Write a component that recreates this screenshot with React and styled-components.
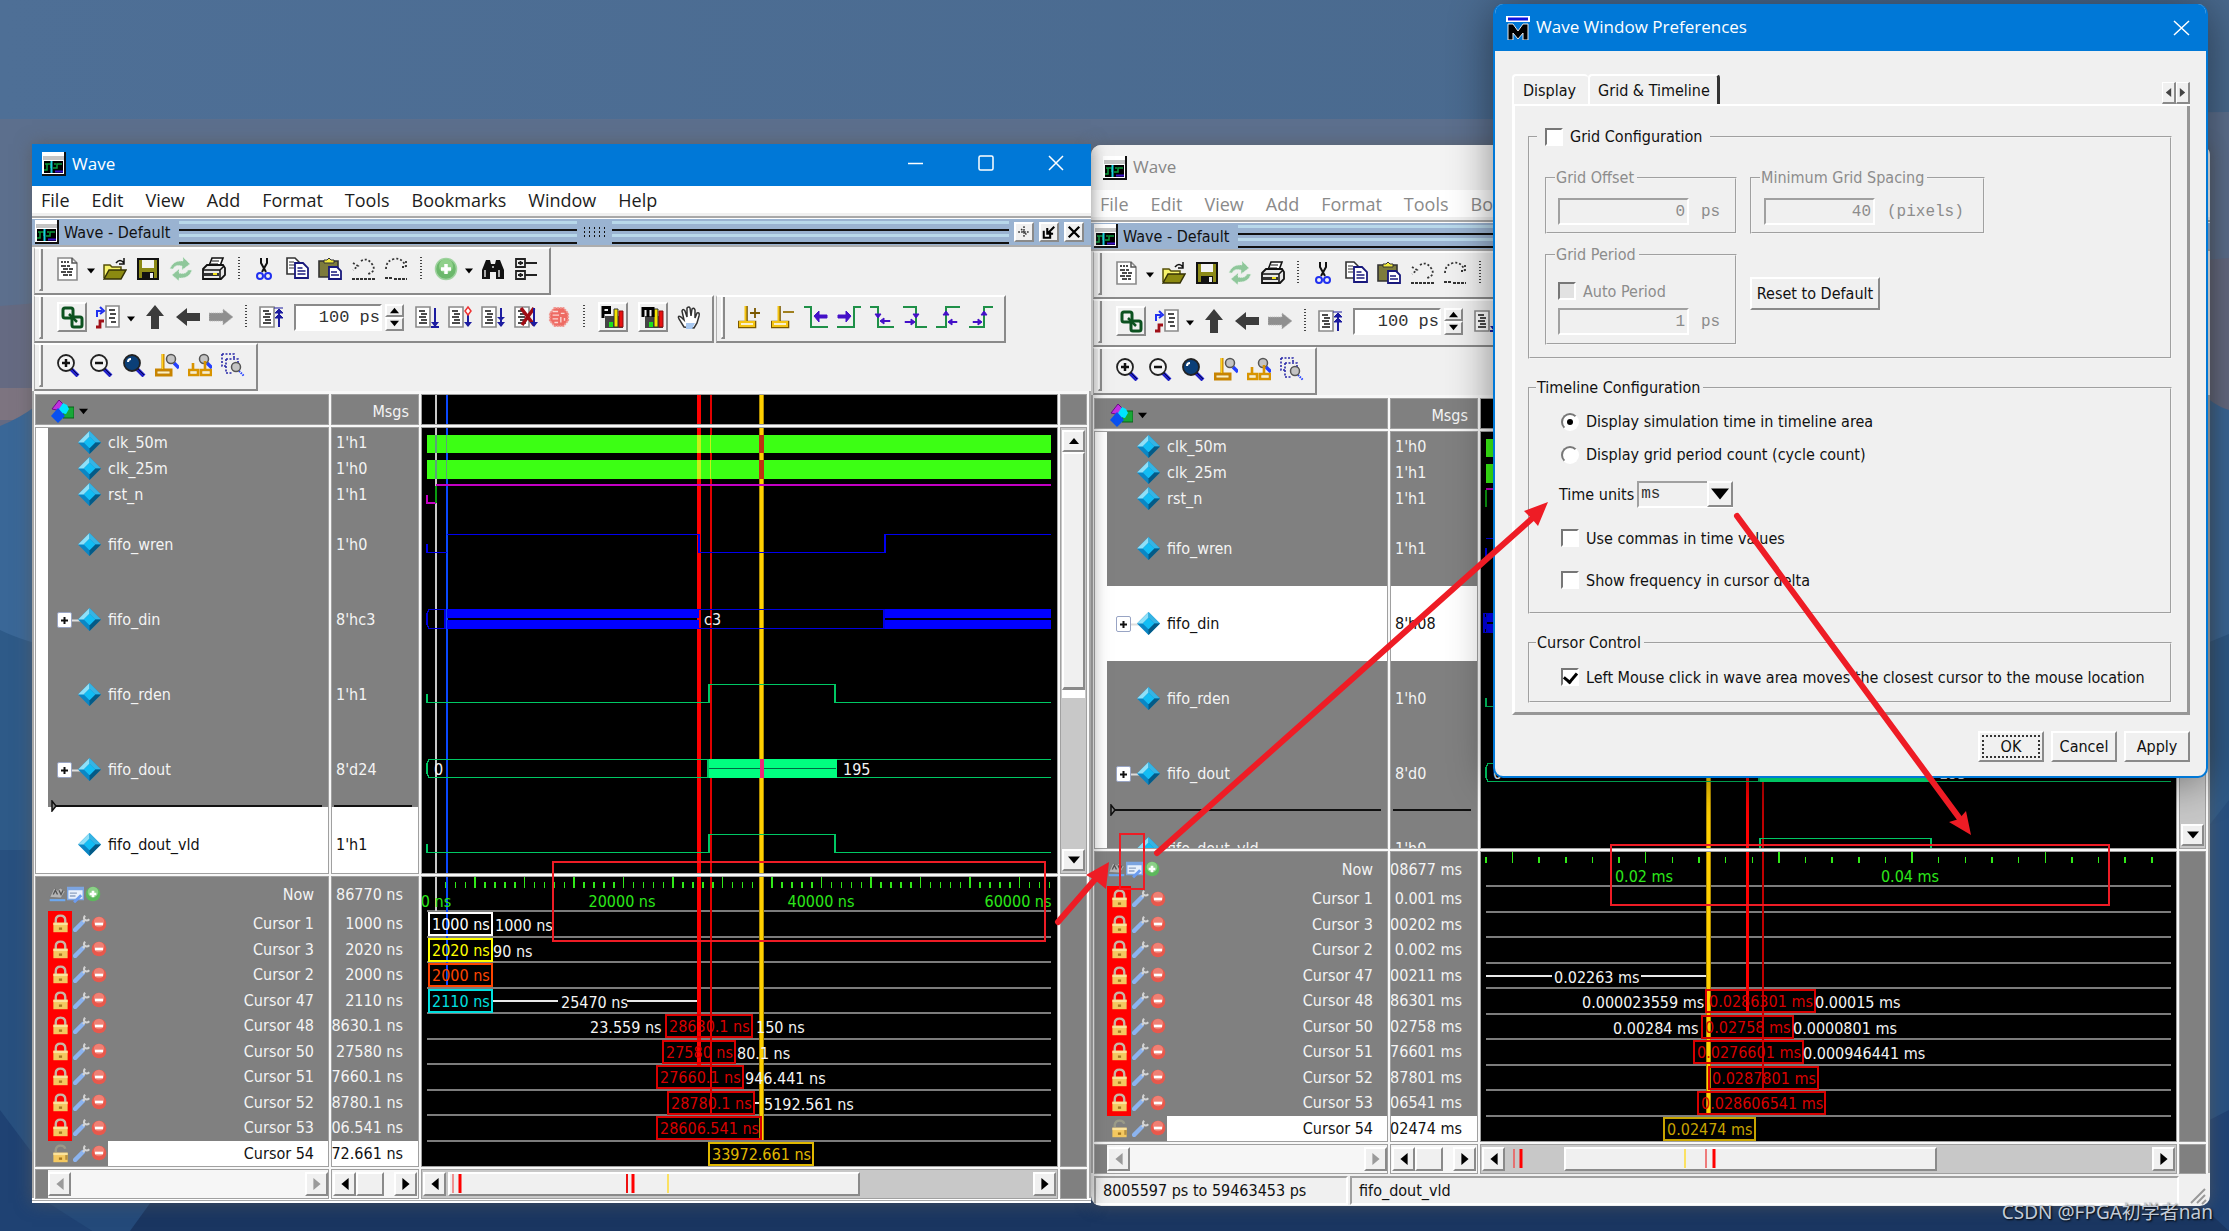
import React from "react";
import styled, { createGlobalStyle, css } from "styled-components";

const UI = `"DejaVu Sans Condensed", "DejaVu Sans", sans-serif`;
const SHELL = `"Open Sans", "Noto Sans", sans-serif`;
const MONO = `"Liberation Mono", monospace`;

const Global = createGlobalStyle`
  * { box-sizing: border-box; }
  body { margin: 0; background: #1b3863; font-family: ${UI}; font-size: 16px; color: #111; }
  button { font: inherit; color: inherit; border: 0; background: none; padding: 0; margin: 0; }
  svg { display: block; flex: none; }
`;

const raised = css`
  background: #f0f0f0;
  border: 2px solid;
  border-color: #fff #8a8a8a #8a8a8a #fff;
`;

/* ---------- desktop ---------- */

const Desktop = styled.main`
  position: relative;
  min-height: 100vh;
  overflow: hidden;
  display: grid;
  grid-template-columns: 32fr minmax(0, 1059fr) minmax(0, 1119fr) 19fr;
  align-items: start;
`;

const Layer = styled.svg`
  position: absolute;
  inset: 0;
  width: 100%;
  height: 100%;
  pointer-events: none;
`;

const Win = styled.section`
  position: relative;
  grid-row: 1;
  grid-column: ${(p) => p.$col};
  margin-top: ${(p) => (p.$active ? 144 : 145)}px;
  background: #f0f0f0;
  border-radius: ${(p) => (p.$active ? "0" : "10px")};
  overflow: hidden;
  box-shadow: 0 0 16px rgba(90, 90, 90, 0.7);
`;

const TitleBar = styled.header`
  display: flex;
  align-items: center;
  gap: 6px;
  height: ${(p) => (p.$active ? 42 : 45)}px;
  padding: ${(p) => (p.$active ? "0 3px 2px 10px" : "0 3px 0 12px")};
  font: 17px ${SHELL};
  color: ${(p) => (p.$active ? "#fff" : "#868686")};
  background: ${(p) => (p.$active ? "#0078d7" : "#f3f3f3")};
`;

const TitleText = styled.h1`
  margin: 0;
  flex: 1;
  font: inherit;
  padding-bottom: 2px;
`;

const CaptionButton = styled.button`
  width: 64px;
  height: 100%;
  padding-bottom: 2px;
  display: flex;
  align-items: center;
  justify-content: center;
`;

const MenuBar = styled.nav`
  display: flex;
  gap: 22px;
  height: 33px;
  padding: 0 9px 6px;
  align-items: center;
  background: linear-gradient(#fff 27px, #f0f0f0 27px 30px, #a8a8a8 30px 32px, #fff 32px);
  font: 18px ${SHELL};
  color: ${(p) => (p.$active ? "#1c1c1c" : "#8a8a8a")};
`;

const DockBar = styled.div`
  display: flex;
  align-items: center;
  gap: 5px;
  height: 28px;
  padding: 0 7px 0 3px;
  background: #9ab3d1;
  border-bottom: 2px solid #adadad;
`;

const DockTitle = styled.span`
  margin-right: 4px;
  white-space: nowrap;
`;

const Grip = styled.span`
  flex: 1;
  display: grid;
  gap: 3px;
  &::before,
  &::after {
    content: "";
    height: 5px;
    border-top: 3px solid #b8d8ea;
    border-bottom: 2px solid #111;
  }
`;

const GripDots = styled.span`
  width: 25px;
  height: 12px;
  background: radial-gradient(circle, #111 1px, transparent 1px) 0 0 / 5px 4px;
`;

const DockButton = styled.button`
  ${raised}
  width: 20px;
  height: 20px;
  display: flex;
  align-items: center;
  justify-content: center;
`;

/* ---------- toolbars ---------- */

const BarRow = styled.div`
  display: flex;
  gap: 2px;
  height: 48px;
  padding-left: 2px;
`;

const Toolbar = styled.div`
  display: flex;
  flex: none;
  align-items: center;
  padding: 0 7px 4px 4px;
  border-top: 2px solid #fff;
  border-left: 1px solid #b0b0b0;
  border-right: 2px solid #8a8a8a;
  border-bottom: 2px solid #8a8a8a;
`;

const Handle = styled.span`
  width: 4px;
  height: 42px;
  margin: 2px 8px 0 0;
  border-left: 1px solid #fff;
  border-right: 2px solid #8a8a8a;
  border-bottom: 2px solid #8a8a8a;
`;

const Tool = styled.button`
  width: 33px;
  height: 30px;
  display: flex;
  align-items: center;
  justify-content: center;
  ${(p) =>
    p.$raised &&
    css`
      ${raised}
      width: 30px;
      margin: 0 4px 0 6px;
    `}
`;

const Caret = styled.button`
  width: 14px;
  height: 30px;
  display: flex;
  align-items: center;
  justify-content: center;
  padding-top: 4px;
`;

const Sep = styled.span`
  width: 2px;
  height: 24px;
  margin: 0 7px 0 8px;
  background: repeating-linear-gradient(#444 0 1px, transparent 1px 3px);
`;

const StepInput = styled.input`
  width: 88px;
  height: 27px;
  margin: 0 3px 0 7px;
  padding: 0;
  border: 2px solid;
  border-color: #8a8a8a #fff #fff #8a8a8a;
  background: #fff;
  text-align: right;
  font: 17px ${MONO};
  color: #333;
`;

const Spinner = styled.span`
  display: grid;
  width: 19px;
  height: 27px;
  margin-right: 6px;
  grid-template-rows: 1fr 1fr;
`;

const SpinButton = styled.button`
  ${raised}
  display: flex;
  align-items: center;
  justify-content: center;
`;

/* ---------- panes ---------- */

const Panes = styled.div`
  display: grid;
  grid-template-columns: 292px 86px minmax(0, 1fr) 25px;
  grid-template-rows: 29px ${(p) => p.$signals}px 289px 28px;
  gap: 4px;
  padding: 4px 5px 0 4px;
  background: #f8f8f8;
  box-shadow: inset 2px 0 #a8a8a8, inset -2px 0 #a8a8a8;
`;

const Cell = styled.div`
  position: relative;
  overflow: hidden;
  background: ${(p) => p.$bg || "#808080"};
  outline: 1px solid #a0a0a0;
`;

const HeadCell = styled(Cell)`
  display: flex;
  align-items: center;
  justify-content: ${(p) => (p.$end ? "flex-end" : "flex-start")};
  padding: 3px 9px 0 14px;
  gap: 5px;
  color: #f4f4f4;
`;

const SignalCell = styled(Cell)`
  padding-top: 1px;
  background: ${(p) => (p.$strip ? "linear-gradient(90deg, #fff 12px, #808080 12px)" : "#808080")};
`;

const SignalRow = styled.div`
  display: flex;
  align-items: center;
  height: ${(p) => (p.$tall ? 75 : 26)}px;
  padding-left: ${(p) => (p.$value ? 4 : 21)}px;
  color: ${(p) => (p.$selected ? "#111" : "#f4f4f4")};
  background: ${(p) => (p.$selected ? "#fff" : "transparent")};
`;

const Expander = styled.span`
  display: flex;
  width: 21px;
  height: 24px;
  align-items: center;
`;

const SignalName = styled.span`
  padding-left: 7px;
`;

const Divider = styled.div`
  position: relative;
  height: 2px;
  margin: -2px 6px 0 ${(p) => (p.$value ? 2 : 18)}px;
  background: #111;
`;

const InsertMark = styled.svg`
  position: absolute;
  left: -3px;
  top: -5px;
`;

const CursorGrid = styled(Cell)`
  display: grid;
  grid-template-rows: 34px repeat(10, 1fr);
  color: #f4f4f4;
`;

const CursorRow = styled.div`
  display: flex;
  align-items: center;
  min-height: 0;
  padding-left: 12px;
`;

const LockBox = styled.button`
  width: 24px;
  height: 100%;
  display: flex;
  align-items: center;
  justify-content: center;
  background: ${(p) => (p.$locked ? "#f00" : "transparent")};
`;

const IconButton = styled.button`
  display: flex;
  width: 18px;
  align-items: center;
  justify-content: center;
`;

const CursorName = styled.span`
  flex: 1;
  height: 100%;
  display: flex;
  align-items: center;
  justify-content: flex-end;
  padding-right: 14px;
  white-space: pre;
  color: ${(p) => (p.$selected ? "#111" : "inherit")};
  background: ${(p) => (p.$selected ? "#fff" : "transparent")};
`;

const CursorValue = styled.div`
  display: flex;
  align-items: center;
  justify-content: flex-end;
  min-width: 0;
  min-height: 0;
  padding-right: 15px;
  white-space: nowrap;
  color: ${(p) => (p.$selected ? "#111" : "inherit")};
  background: ${(p) => (p.$selected ? "#fff" : "transparent")};
`;

const Plot = styled.svg`
  position: absolute;
  inset: 0;
  width: 100%;
  height: 100%;
`;

const Mark = styled.span`
  position: absolute;
  height: 24px;
  line-height: 24px;
  white-space: nowrap;
  color: ${(p) => p.$color || "#f4f4f4"};
  ${(p) => p.$center && "transform: translateX(-50%);"}
  ${(p) =>
    p.$boxed &&
    css`
      border: 2px solid ${p.$color};
      padding: 0 1px 0 2px;
      line-height: 21px;
    `}
`;

/* ---------- scroll bars ---------- */

const HBar = styled(Cell)`
  display: flex;
  padding: ${(p) => (p.$inset ? "2px 0 2px 12px" : "2px 1px")};
  background: ${(p) => (p.$inset ? "linear-gradient(90deg, #808080 12px, #f6f6f6 12px)" : p.$bg || "#f6f6f6")};
`;

const ScrollButton = styled.button`
  ${raised}
  flex: none;
  width: ${(p) => p.$w || 23}px;
  height: ${(p) => p.$h || 24}px;
  display: flex;
  align-items: center;
  justify-content: center;
`;

const HThumb = styled.span`
  ${raised}
  flex: ${(p) => p.$flex || "none"};
  width: ${(p) => p.$w || "auto"};
`;

const Fill = styled.span`
  flex: ${(p) => p.$n || 1};
`;

const VBar = styled(Cell)`
  display: flex;
  flex-direction: column;
  padding: 2px 1px;
  background: #c8c8c8;
`;

const VThumb = styled.span`
  ${raised}
  height: 238px;
  border-bottom-width: 3px;
  box-shadow: 0 8px #fff;
`;

const StatusBar = styled.footer`
  display: grid;
  grid-template-columns: 254px 1fr 26px;
  height: 33px;
  padding: 3px 3px 1px;
  gap: 2px;
  align-items: stretch;
`;

const StatusCell = styled.span`
  display: flex;
  align-items: center;
  padding-left: 7px;
  white-space: nowrap;
  border: 2px solid;
  border-color: #a0a0a0 #fff #fff #a0a0a0;
`;

const BottomEdge = styled.div`
  height: 5px;
  background: linear-gradient(#fff 2px, #a8a8a8 2px 3px, #fff 3px);
`;

/* ---------- dialog ---------- */

const Dialog = styled.section`
  position: absolute;
  top: 4px;
  right: 21px;
  width: 715px;
  background: #f0f0f0;
  border: 2px solid #0078d7;
  border-top: 0;
  border-radius: 10px;
  overflow: hidden;
  box-shadow: 0 4px 44px rgba(0, 0, 0, 0.45);
`;

const DialogTitle = styled.header`
  display: flex;
  align-items: center;
  height: 47px;
  padding: 0 12px 0 11px;
  gap: 6px;
  background: #0078d7;
  color: #fff;
  font: 17px ${SHELL};
`;

const DialogBody = styled.div`
  padding: 23px 16px 14px 17px;
`;

const TabRow = styled.div`
  display: flex;
  height: 32px;
  border-bottom: 2px solid #fff;
`;

const Tab = styled.button`
  padding: 0 ${(p) => (p.$active ? 7 : 12)}px 0 ${(p) => (p.$active ? 8 : 9)}px;
  border-top: 2px solid #fff;
  border-left: 2px solid #fff;
  border-right: ${(p) => (p.$active ? "3px solid #333" : "0")};
  border-radius: 4px 4px 0 0;
`;

const TabScroll = styled.div`
  display: flex;
  align-self: flex-end;
  margin-left: auto;
`;

const TabScrollButton = styled.button`
  ${raised}
  width: 14px;
  height: 22px;
  border-width: 1px 2px 2px 1px;
  display: flex;
  align-items: center;
  justify-content: center;
`;

const TabPage = styled.div`
  display: grid;
  gap: 19px;
  padding: 21px 15px 9px 13px;
  border-left: 3px solid #fff;
  border-right: 3px solid #979797;
  border-bottom: 3px solid #979797;
`;

const Group = styled.fieldset`
  min-width: 0;
  margin: 0;
  padding: ${(p) => p.$pad || "0"};
  border: 2px groove #f4f4f4;
  color: ${(p) => (p.$dim ? "#8c8c8c" : "inherit")};
  align-self: start;
`;

const Legend = styled.legend`
  height: 20px;
  line-height: 20px;
  margin-left: -${(p) => p.$pull}px;
  padding: 0 ${(p) => (p.$wide ? 8 : 3)}px 0 ${(p) => (p.$wide ? 8 : 1)}px;
`;

const GridForm = styled.div`
  display: grid;
  grid-template-columns: 192px 235px;
  gap: 11px 13px;
`;

const Field = styled.label`
  display: flex;
  align-items: center;
  gap: 12px;
  font: 16px ${MONO};
`;

const NumberInput = styled.input`
  width: ${(p) => p.$w}px;
  height: 27px;
  padding: 0 2px;
  border: 2px solid;
  border-color: #a0a0a0 #fff #fff #a0a0a0;
  background: #f0f0f0;
  color: #8c8c8c;
  text-align: right;
  font: 16px ${MONO};
`;

const Choice = styled.label`
  display: flex;
  align-items: center;
  gap: 7px;
  height: ${(p) => p.$h}px;
  white-space: nowrap;
  color: ${(p) => (p.$dim ? "#8c8c8c" : "inherit")};
`;

const Box = styled.input`
  appearance: none;
  flex: none;
  width: 18px;
  height: 18px;
  margin: 0;
  border: 2px solid;
  border-color: #777 #fff #fff #777;
  border-radius: ${(p) => (p.type === "radio" ? "50%" : "0")};
  background: ${(p) => (p.disabled ? "#e2e2e2" : "#fff")};
  display: grid;
  place-items: center;
  &[type="radio"]:checked::before {
    content: "";
    width: 6px;
    height: 6px;
    border-radius: 50%;
    background: #000;
  }
  &[type="checkbox"]:checked::before {
    content: "";
    width: 6px;
    height: 10px;
    margin-bottom: 3px;
    border: solid #000;
    border-width: 0 3px 3px 0;
    transform: rotate(40deg);
  }
`;

const UnitRow = styled.label`
  display: flex;
  align-items: center;
  gap: 3px;
  height: 46px;
  margin-left: -2px;
`;

const UnitWrap = styled.span`
  position: relative;
  display: flex;
`;

const UnitSelect = styled.select`
  appearance: none;
  width: 96px;
  height: 27px;
  padding: 0 2px;
  border: 2px solid;
  border-color: #a0a0a0 #fff #fff #a0a0a0;
  border-radius: 0;
  background: #f0f0f0;
  color: #333;
  font: 16px ${MONO};
`;

const UnitArrow = styled.span`
  ${raised}
  position: absolute;
  top: 0;
  right: 0;
  width: 26px;
  height: 26px;
  display: grid;
  place-items: center;
  pointer-events: none;
`;

const PushButton = styled.button`
  ${raised}
  height: ${(p) => p.$h || 31}px;
  min-width: 66px;
  padding: 0 2px;
  ${(p) => p.$focus && "outline: 2px dotted #333; outline-offset: -6px;"}
  ${(p) => p.$placed && "justify-self: start; margin-top: 32px; min-width: 130px;"}
`;

const Footer = styled.div`
  display: flex;
  justify-content: flex-end;
  gap: 7px;
  margin-top: 16px;
`;

const Watermark = styled.p`
  position: absolute;
  right: 16px;
  bottom: 6px;
  margin: 0;
  font: 19px/26px "Noto Sans", "Noto Sans CJK SC", sans-serif;
  color: #c3ccd8;
  text-shadow: 1px 1px 2px #000;
`;

/* ---------- icons ---------- */

const Icon = ({ children, s = 24, ...rest }) => (
  <svg width={s} height={s} viewBox="0 0 24 24" fill="none" aria-hidden="true" {...rest}>
    {children}
  </svg>
);

const Triangle = ({ dir = "down", color = "#000", s = 10 }) => {
  const d = { down: "M0 2h10L5 8z", up: "M0 8h10L5 2z", left: "M8 0v10L2 5z", right: "M2 0v10l6-5z" }[dir];
  return (
    <svg width={s} height={s} viewBox="0 0 10 10" aria-hidden="true">
      <path d={d} fill={color} />
    </svg>
  );
};

const AppIcon = () => (
  <Icon>
    <path d="M0 0h24v24H0z" fill="#111" />
    <path d="M0 0h22v22H0z" fill="#fff" />
    <path d="M1 4h21v4H1z" fill="#c4c4c4" />
    <path d="M2 9h19v12H2z" fill="#000" />
    <path d="M2 18h3v-6h4v4M11 16h4v-4h5M3 12h3M12 12h2" stroke="#0a9c3c" strokeWidth="1.5" />
    <path d="M9.500 9v12" stroke="#19d0e0" strokeWidth="2" />
    <path d="M13 19.500h8" stroke="#3a10c8" strokeWidth="2" />
  </Icon>
);

const Page = ({ x = 2 }) => (
  <>
    <path d={`M${x} 2h14v20H${x}z`} fill="#fff" stroke="#8a8a8a" strokeWidth="1.600" />
    <path
      d={`M${x + 3} 6h6M${x + 5} 9h6M${x + 3} 12h7M${x + 5} 15h6M${x + 3} 18h8`}
      stroke="#111"
      strokeWidth="1.500"
    />
  </>
);

const Lens = ({ fill = "#f4f4f4", children }) => (
  <Icon>
    <path d="M15 16l7 7" stroke="#2020c8" strokeWidth="4" />
    <path d="M15 15l7 7" stroke="#08084a" strokeWidth="1" />
    <circle cx="10" cy="10" r="8" fill={fill} stroke="#222" strokeWidth="1.800" />
    {children}
  </Icon>
);

const MiniLens = ({ x, y, dashed }) => (
  <>
    <path d={`M${x + 3} ${y + 4}l5 5`} stroke="#2440ff" strokeWidth={dashed ? 2 : 3.5} strokeDasharray={dashed ? "1.500 1" : ""} />
    <circle cx={x} cy={y} r="4.500" fill="#c4c4c4" stroke="#555" strokeWidth="1.500" />
  </>
);

const Edge = ({ d, arrows }) => (
  <Icon>
    <path d={d} stroke="#1f9048" strokeWidth="2" />
    <path d={arrows} fill="#4410c8" stroke="#4410c8" strokeWidth="1" />
  </Icon>
);

const Bars = ({ letter }) => (
  <Icon>
    <path d="M4 11h18v12H4z" fill="#444" />
    <path d="M8 17h4v5H8z" fill="#1ce01c" />
    <path d="M13 4h4v18h-4z" fill="#f4e400" stroke="#333" />
    <path d="M18 6h4v16h-4z" fill="#e81010" stroke="#811" />
    {letter === "P" ? (
      <path d="M2 13V2.500h6.500v5H2" stroke="#000" strokeWidth="3" />
    ) : (
      <path d="M2 12V3.500h10V12M7 4v8" stroke="#000" strokeWidth="3" />
    )}
  </Icon>
);

const RunArrow = ({ kind }) => (
  <Icon>
    <Page x={1} />
    {kind === "cross" && <path d="M7 3l13 17M20 3L8 20" stroke="#a00c14" strokeWidth="3.500" />}
    <path
      d={kind === "restart" ? "M20 22V4" : kind === "diamond" ? "M20 9v12" : "M20 3v18"}
      stroke="#1c1ca0"
      strokeWidth="2"
    />
    {kind === "restart" ? (
      <path d="M15 3h9M16 8l4-4 4 4zM16 13l4-4 4 4z" fill="#1c1ca0" stroke="#1c1ca0" />
    ) : (
      <path d="M16 17h8l-4 5z" fill="#1c1ca0" />
    )}
    {kind === "all" && <path d="M16 12h8l-4 4z" fill="#1c1ca0" />}
    {kind === "run" && <path d="M16 22h8" stroke="#1c1ca0" strokeWidth="2" />}
    {kind === "diamond" && <path d="M20 2l3 4-3 4-3-4z" fill="#fff" stroke="#e33" strokeWidth="1.500" />}
  </Icon>
);

const arrowGrad = "#3c3c3c";

const icons = {
  new: (
    <Icon>
      <path d="M2 1h14l5 5v17H2z" fill="#fff" stroke="#8a8a8a" strokeWidth="1.600" />
      <path d="M16 1v5h5" stroke="#555" strokeWidth="1.500" />
      <path d="M5 5h8" stroke="#111" strokeDasharray="2 1" strokeWidth="1.500" />
      <path d="M5 9h9M7 12h10M5 15h11M7 18h9" stroke="#111" strokeWidth="1.500" strokeDasharray="5 1" />
    </Icon>
  ),
  open: (
    <Icon>
      <path d="M1 21V8h6l2 2h9v3" fill="#f7f36c" stroke="#55500a" strokeWidth="1.500" />
      <path d="M1 22l5-9h17l-5 9z" fill="#8c8a10" stroke="#333005" strokeWidth="1.500" />
      <path d="M13 6q4-5 8 0M21 1v6h-5" stroke="#111" strokeWidth="1.500" />
    </Icon>
  ),
  save: (
    <Icon>
      <path d="M2 2h20v20H2z" fill="#8c8a18" stroke="#111" strokeWidth="2" />
      <path d="M6 3h12v8H6z" fill="#f4f4f4" />
      <path d="M6 15h12v7H6z" fill="#111" />
      <path d="M14 16h3v5h-3z" fill="#eee" />
    </Icon>
  ),
  reload: (
    <Icon fill="#8fc79b" stroke="#dff0e2" strokeWidth="1" strokeDasharray="1 1">
      <path d="M1 12q3-9 13-8V0l7 7-8 6V9q-7-2-9 3z" fill="#8fc79b" />
      <path d="M23 13q-3 9-13 8v3l-7-6 7-6v4q7 2 9-3z" fill="#8fc79b" />
    </Icon>
  ),
  print: (
    <Icon>
      <path d="M7 9l3-8h11l-3 8z" fill="#fff" stroke="#111" strokeWidth="1.600" />
      <path d="M10 4h7M9 7h7" stroke="#111" />
      <path d="M1 12l4-4h16l2 3v7l-4 4H1z" fill="#e8e8e8" stroke="#111" strokeWidth="1.800" />
      <path d="M1 13h17l4-4M18 13v8" stroke="#111" strokeWidth="1.500" />
      <path d="M2 17.500h15" stroke="#333" strokeWidth="3" />
      <path d="M11 17h4" stroke="#f2e21c" strokeWidth="2" />
    </Icon>
  ),
  cut: (
    <Icon>
      <path d="M9 1v5l5 9M15 1v5l-5 9" stroke="#111" strokeWidth="2" />
      <circle cx="8" cy="19" r="3" stroke="#2030f0" strokeWidth="2" />
      <circle cx="16" cy="19" r="3" stroke="#2030f0" strokeWidth="2" />
    </Icon>
  ),
  copy: (
    <Icon>
      <path d="M2 1h8l4 4v12H2z" fill="#fff" stroke="#333" strokeWidth="1.600" />
      <path d="M4 5h5M4 8h6M4 11h5" stroke="#333" />
      <path d="M10 6h8l5 5v10H10z" fill="#fff" stroke="#18187c" strokeWidth="1.800" />
      <path d="M12.500 11h5M12.500 14h8M12.500 17h8" stroke="#18187c" strokeWidth="1.500" />
    </Icon>
  ),
  paste: (
    <Icon>
      <path d="M1 4h19v16H1z" fill="#7d7b3c" stroke="#333" strokeWidth="1.600" />
      <path d="M6 6V3h3l2-2 2 2h3v3z" fill="#f4ec3c" stroke="#333" />
      <path d="M11 10h8l4 4v8H11z" fill="#fff" stroke="#18187c" strokeWidth="1.800" />
      <path d="M13 15h6M13 18h8" stroke="#18187c" strokeWidth="1.500" />
    </Icon>
  ),
  undo: (
    <Icon stroke="#333" strokeWidth="1.800">
      <path d="M2 6l5 3-5 4M10 4q6-4 11 3t-4 10" strokeDasharray="2 2" />
      <path d="M1 22h23" strokeDasharray="3 1" />
    </Icon>
  ),
  redo: (
    <Icon stroke="#333" strokeWidth="1.800">
      <path d="M22 4v6h-6M2 12q0-8 8-10t12 8" strokeDasharray="2 2" />
      <path d="M1 21h8M10 22h13" strokeDasharray="3 1" />
    </Icon>
  ),
  plus: (
    <Icon>
      <circle cx="12" cy="12" r="10.500" fill="#6cb86c" stroke="#9ed29e" strokeWidth="1.500" />
      <circle cx="12" cy="9" r="7" fill="#8fd08a" />
      <path d="M12 7v10M7 12h10" stroke="#fff" strokeWidth="3.500" />
    </Icon>
  ),
  find: (
    <Icon fill="#111">
      <path d="M1 22V13l4-10h4l1 4h4l1-4h4l4 10v9h-8v-7h-6v7z" fill="#111" />
      <path d="M4 13v7M18 13v7M11 10h2" stroke="#ddd" strokeWidth="1.500" />
    </Icon>
  ),
  tree: (
    <Icon stroke="#222" strokeWidth="1.800">
      <path d="M2 2h9v8H2zM2 14h9v8H2zM11 6h12M11 18h12M4 6h5M6.500 4v4M4 18h5M6.500 16v4" />
    </Icon>
  ),
  link: (
    <Icon stroke="#0c5220" strokeWidth="3">
      <rect x="3" y="3" width="10" height="10" rx="2" />
      <rect x="12" y="12" width="10" height="10" rx="2" />
      <path d="M9 9l8 8" strokeWidth="2.500" />
    </Icon>
  ),
  trace: (
    <Icon>
      <path d="M10 1h13v21H10z" fill="#fff" stroke="#8a8a8a" strokeWidth="1.600" />
      <path d="M13 5h6M14 9h6M13 13h6M15 17h5" stroke="#111" strokeWidth="1.600" />
      <path d="M1 12V6h5M4 2l4 4-4 3" stroke="#2030f0" strokeWidth="2" />
      <path d="M0 22h4v-6h4" stroke="#a01018" strokeWidth="2.800" />
    </Icon>
  ),
  up: (
    <Icon>
      <path d="M12 0l9 11h-5v13H8V11H3z" fill={arrowGrad} />
    </Icon>
  ),
  left: (
    <Icon>
      <path d="M0 12L11 3v5h13v8H11v5z" fill={arrowGrad} />
    </Icon>
  ),
  right: (
    <Icon>
      <path d="M24 12L14 4v4H0v8h14v4z" fill="#8f8f8f" stroke="#b8b8b8" strokeDasharray="1 1" />
    </Icon>
  ),
  restart: <RunArrow kind="restart" />,
  run: <RunArrow kind="run" />,
  cont: <RunArrow kind="diamond" />,
  runAll: <RunArrow kind="all" />,
  breakRun: <RunArrow kind="cross" />,
  stop: (
    <Icon s={22}>
      <path d="M7 2h10l5 6v8l-5 6H7l-5-6V8z" fill="#ee6b63" stroke="#f09a94" strokeWidth="2" strokeDasharray="2 1" />
      <path d="M11 6H5M5 10h7M5 14h6M7 18h4M14 8h4M14 12v6M18 13v3" stroke="#fbd6d2" strokeWidth="1.500" />
    </Icon>
  ),
  barsP: <Bars letter="P" />,
  barsM: <Bars letter="m" />,
  hand: (
    <Icon>
      <path
        d="M7 22l-5-8q-2-4 2-2l3 3-2-9q1-3 3 0l2 6V3q2-2 3 0l1 8 1-7q2-2 3 1v8l2-5q3-1 2 3l-2 7-3 5z"
        fill="#fff"
        stroke="#333"
        strokeWidth="1.500"
      />
      <path d="M9 18h9l-3 6H9z" fill="#a8c8f0" />
    </Icon>
  ),
  postPlus: (
    <Icon stroke="#7a5800" strokeWidth="2.600">
      <path d="M8.500 1v16M1 17h16v5H1z" stroke="#7a5800" />
      <path d="M7.500 1v16M2 17h14v4H2z" stroke="#f4c414" strokeWidth="2" fill="#f8f0d0" />
      <path d="M12 8h10M17 3v10" strokeWidth="1.800" />
    </Icon>
  ),
  postMinus: (
    <Icon>
      <path d="M8.500 1v16M1 17h16v5H1z" stroke="#7a5800" strokeWidth="2.600" />
      <path d="M7.500 1v16M2 17h14v4H2z" stroke="#f4c414" strokeWidth="2" fill="#f8f0d0" />
      <path d="M12 7h11" stroke="#a08020" strokeWidth="2" />
    </Icon>
  ),
  e1: <Edge d="M0 2h7v20h17" arrows="M10 11l5-5v4h8v3h-8v4z" />,
  e2: <Edge d="M24 2h-7v20H0" arrows="M14 11L9 6v4H1v3h8v4z" />,
  e3: <Edge d="M0 2h8v20h16" arrows="M5 9h6l-3 4zM10 16l4-3v2.500h6v1h-6V19z" />,
  e4: <Edge d="M0 2h13v20h11" arrows="M10 9h6l-3 4zM12 17l-4-3v2.500H2v1h6V20z" />,
  e5: <Edge d="M0 22h10V2h14" arrows="M7 10h6l-3-4zM12 17l4-3v2.500h5v1h-5V20z" />,
  e6: <Edge d="M0 22h15V2h9" arrows="M12 10h6l-3-4zM13 17l-4-3v2.500H4v1h5V20z" />,
  zoomIn: (
    <Lens>
      <path d="M10 6v8M6 10h8" stroke="#111" strokeWidth="2.500" />
    </Lens>
  ),
  zoomOut: (
    <Lens>
      <path d="M6 10h8" stroke="#111" strokeWidth="2.500" />
    </Lens>
  ),
  zoomFull: (
    <Lens fill="#0b3f78">
      <path d="M6 9q0-3 3-3" stroke="#fff" strokeWidth="2" />
    </Lens>
  ),
  zoomCursor: (
    <Icon>
      <path d="M8 1v15M1 17h15v5H1z" stroke="#c88400" strokeWidth="3" />
      <path d="M7.500 1v15" stroke="#ffd21c" strokeWidth="1.500" />
      <path d="M3 19h11v1H3z" fill="#fff3b8" />
      <MiniLens x={16} y={6} />
    </Icon>
  ),
  zoomRange: (
    <Icon>
      <MiniLens x={16} y={6} />
      <path d="M5 10v7M1 17h9v5H1zM17 8v9M13 17h10v5H13z" stroke="#d89400" strokeWidth="2.600" />
      <path d="M3 19.500h5M15 19.500h6" stroke="#fff3b8" />
    </Icon>
  ),
  zoomBox: (
    <Icon>
      <path d="M1 1h12v4M1 1v12h4M5 6h12v4M5 6v14h7" stroke="#2828a8" strokeWidth="1.600" strokeDasharray="2 1.500" />
      <MiniLens x={15} y={14} dashed />
    </Icon>
  ),
};

const Gem = () => (
  <Icon s={23}>
    <path d="M12 0l12 12-12 12L0 12z" fill="#0a86c4" />
    <path d="M12 0L0 12h6l6-6z" fill="#8fe0f8" />
    <path d="M12 0l12 12h-6l-6-6z" fill="#35b4e4" />
    <path d="M24 12L12 24v-6l6-6z" fill="#045a86" />
    <path d="M12 6l6 6-6 6-6-6z" fill="#12bdf4" />
  </Icon>
);

const Plus = () => (
  <svg width="24" height="16" viewBox="0 0 24 16" aria-hidden="true">
    <path d="M15 8.500h9" stroke="#ddd" strokeWidth="2" />
    <rect x=".5" y=".5" width="14" height="15" rx="1.500" fill="#fff" stroke="#98a4c4" />
    <path d="M4 8.500h7M7.500 5v7" stroke="#111" strokeWidth="2" />
  </svg>
);

const Shapes = () => (
  <Icon>
    <path d="M2 10l7-9 6 6-4 5z" fill="#c030e0" stroke="#6a0c84" />
    <path d="M14 8h10v11H13z" fill="#18a838" stroke="#086018" />
    <path d="M13 4l4 2 2 4-3 5-5-1-2-4z" fill="#00e4ff" />
    <path d="M8 9l7 8-7 7-7-7z" fill="#0850f0" />
  </Icon>
);

const Lock = ({ open }) => (
  <Icon s={19}>
    <path d={open ? "M6 10V7q1-5 6-5 5 0 6 4" : "M6 12V8q0-6 6-6t6 6v4"} stroke={open ? "#9a9a88" : "#c8b8a8"} strokeWidth="3" />
    <path d="M3 11h18v12H3z" fill="#f4c860" />
    <path d="M3 11h18v3H3z" fill="#fbe29c" />
    <path d="M10 17h4v3h-4z" fill="#a87820" />
    {open && <path d="M18 14h3v6h-3z" fill="#b89040" />}
  </Icon>
);

const Wrench = () => (
  <Icon s={17}>
    <path d="M3 21L14 10" stroke="#8cb4f0" strokeWidth="6" strokeLinecap="round" />
    <path d="M14 10l4-4M17 1q-3 4 0 6t6-1" stroke="#d4d4d4" strokeWidth="3" />
  </Icon>
);

const Minus = () => (
  <Icon s={16}>
    <circle cx="12" cy="12" r="11" fill="#e8584c" />
    <circle cx="12" cy="9" r="8" fill="#f08074" />
    <path d="M6 12h12" stroke="#fff" strokeWidth="4" />
  </Icon>
);

const NowTools = () => (
  <>
    <IconButton aria-label="Find cursor">
      <Icon s={17}>
        <path d="M1 16L7 3l5 3 4-3 7 4-6 10z" fill="#b4b4b4" stroke="#777" />
        <path d="M6 12l3-6 3 6M14 6l3 6 3-6" stroke="#555" strokeWidth="2" />
        <path d="M1 20h22" stroke="#6ca8f0" strokeWidth="3" />
      </Icon>
    </IconButton>
    <IconButton aria-label="Edit grid and timeline">
      <Icon s={17}>
        <path d="M1 2h22v17H1z" fill="#e8f0fc" stroke="#7ca4e0" strokeWidth="2" />
        <path d="M1 2h22v4H1z" fill="#7ca4e0" />
        <path d="M4 10h10M4 14h8" stroke="#8ca0c0" strokeWidth="2" />
        <path d="M10 23l10-10" stroke="#6c9cf0" strokeWidth="4" />
      </Icon>
    </IconButton>
    <IconButton aria-label="Add cursor">
      <Icon s={16}>
        <circle cx="12" cy="12" r="11" fill="#5cb85c" />
        <circle cx="12" cy="9" r="8" fill="#8cd088" />
        <path d="M12 7v10M7 12h10" stroke="#fff" strokeWidth="4" />
      </Icon>
    </IconButton>
  </>
);

/* ---------- data ---------- */

const menus = ["File", "Edit", "View", "Add", "Format", "Tools", "Bookmarks", "Window", "Help"];

const bars = [
  [["new", "^", "open", "save", "reload", "print", "|", "cut", "copy", "paste", "undo", "redo", "|", "plus", "^", "find", "tree"]],
  [
    ["*link", "trace", "^", "up", "left", "right", "|", "restart", "#", "run", "cont", "runAll", "breakRun", "stop", "|", "*barsP", "*barsM", "hand"],
    ["postPlus", "postMinus", "e1", "e2", "e3", "e4", "e5", "e6"],
  ],
  [["zoomIn", "zoomOut", "zoomFull", "zoomCursor", "zoomRange", "zoomBox"]],
];

const signals = ["clk_50m", "clk_25m", "rst_n", "fifo_wren", "fifo_din", "fifo_rden", "fifo_dout", "fifo_dout_vld"];
const cursorIds = [1, 3, 2, 47, 48, 50, 51, 52, 53, 54];
const RED = "#d80000";
const rowTop = (i) => Math.round(34 + 25.5 * i);

const first = {
  id: "a",
  active: true,
  signalHeight: 445,
  values: ["1'h1", "1'h0", "1'h1", "1'h0", "8'hc3", "1'h1", "8'd24", "1'h1"],
  selected: 7,
  now: "86770 ns",
  times: ["1000 ns", "2020 ns", "2000 ns", "2110 ns", "28630.1 ns", "27580 ns", "27660.1 ns", "28780.1 ns", "28606.541 ns", "33972.661 ns"],
  width: 635,
  end: 629,
  fall: 277,
  rise: 463,
  on: 287,
  off: 413,
  start: 14,
  wrStart: 25,
  lines: [
    { x: 14, w: 2, c: "#c8c8c8", to: 34 },
    { x: 24.5, w: 2, c: "#0a48ff", to: 110 },
    { x: 277, w: 4, c: "#f00", to: 190 },
    { x: 288.5, w: 2, c: "#e00000", to: 238 },
    { x: 339.5, w: 5, c: "#ffd000", to: 263, hot: true },
  ],
  ticks: { zero: 3.7, step: 9.9, from: 1, count: 63, major: 5 },
  scale: [[14, "0 ns"], [200, "20000 ns"], [399, "40000 ns"], [596, "60000 ns"]],
  marks: [
    [6, 0, "1000 ns", "#fff"], [6, 1, "2020 ns", "#ffff00"], [6, 2, "2000 ns", "#ff4500"], [6, 3, "2110 ns", "#00e0e0"],
    [243, 4, "28630.1 ns", RED], [240, 5, "27580 ns", RED], [234, 6, "27660.1 ns", RED], [245, 7, "28780.1 ns", RED],
    [234, 8, "28606.541 ns", RED], [286, 9, "33972.661 ns", "#e0b800"],
  ],
  notes: [
    [73, 0, "1000 ns"], [71, 1, "90 ns"], [139, 3, "25470 ns"], [168, 4, "23.559 ns"], [334, 4, "150 ns"],
    [315, 5, "80.1 ns"], [323, 6, "946.441 ns"], [342, 7, "5192.561 ns"],
  ],
  rules: [[70, 136, 3], [205, 276, 3], [333, 339, 7]],
  texts: [[12, 342, "0"], [282, 192, "c3"], [421, 342, "195"]],
  track: { pre: 2, thumb: 409, post: 174, marks: [[30, 1, "#e33"], [37, 3, "#f00"], [204, 2, "#e11"], [210, 3, "#f00"], [245, 1.5, "#fd3"]] },
};

const second = {
  ...first,
  id: "b",
  active: false,
  signalHeight: 416,
  values: ["1'h0", "1'h1", "1'h1", "1'h1", "8'h08", "1'h0", "8'd0", "1'h0"],
  selected: 4,
  now: "0.08677 ms",
  times: ["0.001 ms", "0.00202 ms", "0.002 ms", "0.00211 ms", "0.0286301 ms", "0.02758 ms", "0.0276601 ms", "0.0287801 ms", "0.028606541 ms", "0.02474 ms"],
  width: 695,
  end: 690,
  fall: 266,
  rise: 510,
  on: 279,
  off: 450,
  start: 5,
  wrStart: 5,
  lines: [
    { x: 266, w: 3, c: "#f00", to: 160 },
    { x: 282, w: 2, c: "#c00000", to: 238 },
    { x: 227.500, w: 5, c: "#ffd000", to: 263, hot: true },
  ],
  ticks: { zero: 31.5, step: 26.64, from: -1, count: 26, major: 5 },
  scale: [[163, "0.02 ms"], [429, "0.04 ms"]],
  marks: [
    [224, 4, "0.0286301 ms", RED], [220, 5, "0.02758 ms", RED], [212, 6, "0.0276601 ms", RED], [227, 7, "0.0287801 ms", RED],
    [216, 8, "0.028606541 ms", RED], [182, 9, "0.02474 ms", "#c8a400"],
  ],
  notes: [
    [73, 3, "0.02263 ms"], [101, 4, "0.000023559 ms"], [334, 4, "0.00015 ms"], [132, 5, "0.00284 ms"],
    [312, 5, "0.0000801 ms"], [322, 6, "0.000946441 ms"],
  ],
  rules: [[5, 71, 3], [160, 227, 3]],
  texts: [[12, 342, "0"], [458, 342, "195"]],
  track: { pre: 59, thumb: 371, post: 216, marks: [[32, 1.5, "#e55"], [39, 3, "#f00"], [203, 1.5, "#fd3"], [224, 1.5, "#e55"], [232, 3, "#f00"]] },
};

/* ---------- wave window ---------- */

function ToolItem({ name }) {
  if (name === "|") return <Sep />;
  if (name === "^")
    return (
      <Caret aria-label="More">
        <Triangle s={8} />
      </Caret>
    );
  if (name === "#")
    return (
      <>
        <StepInput aria-label="Run length" defaultValue="100 ps" />
        <Spinner>
          <SpinButton aria-label="Increase"><Triangle dir="up" s={9} /></SpinButton>
          <SpinButton aria-label="Decrease"><Triangle s={9} /></SpinButton>
        </Spinner>
      </>
    );
  const key = name.replace("*", "");
  return (
    <Tool $raised={name[0] === "*"} aria-label={key}>
      {icons[key]}
    </Tool>
  );
}

function CursorLines({ lines, height, stop }) {
  return lines.map((l) => {
    const y2 = stop ? l.to : height;
    return (
      <g key={l.x}>
        {l.hot && <path d={`M${l.x} 0V${y2}`} stroke="#b08c00" strokeWidth={l.w} />}
        <path d={`M${l.x} 0V${y2}`} stroke={l.c} strokeWidth={l.hot ? 3 : l.w} />
      </g>
    );
  });
}

function SignalPlot({ d }) {
  const h = d.signalHeight;
  const { end, fall, rise, on, off, start, wrStart } = d;
  const hot = d.lines.find((l) => l.hot);
  return (
    <Plot viewBox={`0 0 ${d.width} ${h}`} preserveAspectRatio="none" shapeRendering="crispEdges" fill="none" strokeWidth="1.5">
      <CursorLines lines={d.lines} height={h} />
      <path d={`M5 7H${end}V25H5zM5 32H${end}V51H5z`} fill="#3cff14" />
      {d.lines.map((l) => (
        <path
          key={l.x}
          d={`M${l.x} 7V25M${l.x} 32V51`}
          stroke={l.hot ? "#c03010" : l.c === "#f00" || l.c === "#e00000" ? "#c8f018" : "#5ca07c"}
          strokeWidth={l.w - 0.5}
        />
      ))}
      <path d={`M5 67V75H${start}M${start} 57H${end}`} stroke="#c400c4" />
      <path d={`M${start} 58V75`} stroke="#0a9c10" strokeWidth="2" />
      <path d={`M5 116V124.500H${wrStart}M${wrStart} 106.500H${fall}V124.500H${rise}V106.500H${end}`} stroke="#0000f0" />
      <path d={`M${wrStart} 181H${fall}V190H${wrStart}zM${wrStart} 192H${fall}V201H${wrStart}z`} fill="#00f" />
      <path d={`M${rise} 181H${end}V190H${rise}zM${rise} 192H${end}V201H${rise}z`} fill="#00f" />
      <path d={`M7 181.500H${wrStart - 2}V200.500H7L5 196V186zM${fall} 181.500H${rise - 1}V200.500H${fall}`} stroke="#0000e0" />
      <g stroke="#00c864">
        <path d={`M5 266V274.500H${on}V256.500H${off}V274.500H${end}`} />
        <path d={`M7 331.500H${on - 1}V349.500H7L5 345V336zM${off + 2} 331.500H${end}M${off + 2} 349.500H${end}`} />
        <path d={`M5 416V424.500H${on}V406.500H${off}V424.500H${end}`} />
      </g>
      <path d={`M${on} 331H${off + 2}V350H${on}z`} fill="#00ff80" />
      <path d={`M${on} 340.500H${off + 1}`} stroke="#064" />
      <path d={`M${hot.x} 331V350`} stroke="#f02878" strokeWidth="4" opacity={hot.x > on ? 1 : 0} />
    </Plot>
  );
}

function CursorPlot({ d }) {
  const ticks = [];
  for (let i = 0; i < d.ticks.count; i += 1) {
    const n = i + d.ticks.from;
    const x = d.ticks.zero + n * d.ticks.step;
    ticks.push(`M${x.toFixed(1)} ${n % d.ticks.major === 0 ? 0 : 5}V11`);
  }
  const pct = (x) => `${(x / d.width) * 100}%`;
  return (
    <>
      <Plot viewBox={`0 0 ${d.width} 289`} preserveAspectRatio="none" shapeRendering="crispEdges" fill="none">
        <path d={ticks.join("")} stroke="#30e818" strokeWidth="1.500" />
        <path d={cursorIds.map((_, i) => `M5 ${rowTop(i)}H${d.end}`).join("")} stroke="#7c7c7c" strokeWidth="1.500" />
        <path d={d.rules.map(([a, b, r]) => `M${a} ${rowTop(r) + 13}H${b}`).join("")} stroke="#e8e8e8" strokeWidth="1.500" />
        <CursorLines lines={d.lines} stop />
      </Plot>
      {d.scale.map(([x, t]) => (
        <Mark key={t} $center $color="#2ce81a" style={{ left: pct(x), top: 13 }}>{t}</Mark>
      ))}
      {d.marks.map(([x, r, t, c]) => (
        <Mark key={t} $boxed $color={c} style={{ left: pct(x), top: rowTop(r) + 1 }}>{t}</Mark>
      ))}
      {d.notes.map(([x, r, t]) => (
        <Mark key={t} style={{ left: pct(x), top: rowTop(r) + 3 }}>{t}</Mark>
      ))}
    </>
  );
}

function WaveWindow({ d, col }) {
  const { active } = d;
  const pct = (x) => `${(x / d.width) * 100}%`;
  return (
    <Win $col={col} $active={active}>
      <TitleBar $active={active}>
        <AppIcon />
        <TitleText>Wave</TitleText>
        <CaptionButton aria-label="Minimize">
          <svg width="16" height="16" stroke="currentColor" fill="none"><path d="M0 8.500h15" strokeWidth="1.500" /></svg>
        </CaptionButton>
        <CaptionButton aria-label="Maximize">
          <svg width="16" height="16" stroke="currentColor" fill="none"><rect x="1" y="1" width="14" height="14" rx="1.500" strokeWidth="1.500" /></svg>
        </CaptionButton>
        <CaptionButton aria-label="Close">
          <svg width="16" height="16" stroke="currentColor" fill="none"><path d="M1 1l14 14M15 1L1 15" strokeWidth="1.500" /></svg>
        </CaptionButton>
      </TitleBar>
      <MenuBar $active={active}>
        {menus.map((m) => <button key={m}>{m}</button>)}
      </MenuBar>
      <DockBar>
        <AppIcon />
        <DockTitle>Wave - Default</DockTitle>
        <Grip />
        <GripDots />
        <Grip />
        <DockButton aria-label="Zoom pane">
          <Icon s={14}><path d="M12 2v20M2 12h20M7 7l10 10" stroke="#333" strokeWidth="2.500" strokeDasharray="3 2" /></Icon>
        </DockButton>
        <DockButton aria-label="Undock pane">
          <Icon s={14}><path d="M3 10v12h11V12M21 3L10 14M9 5v10h10" stroke="#000" strokeWidth="3.500" /></Icon>
        </DockButton>
        <DockButton aria-label="Close pane">
          <Icon s={14}><path d="M3 3l18 18M21 3L3 21" stroke="#000" strokeWidth="4" /></Icon>
        </DockButton>
      </DockBar>
      {bars.map((row, i) => (
        <BarRow key={i}>
          {row.map((items, j) => (
            <Toolbar key={j}>
              <Handle />
              {items.map((name, k) => <ToolItem key={k} name={name} />)}
            </Toolbar>
          ))}
        </BarRow>
      ))}
      <Panes $signals={d.signalHeight}>
        <HeadCell><Shapes /><Triangle s={9} /></HeadCell>
        <HeadCell $end>Msgs</HeadCell>
        <Cell $bg="#000">
          <Plot viewBox={`0 0 ${d.width} 29`} preserveAspectRatio="none" shapeRendering="crispEdges">
            <CursorLines lines={d.lines} height={29} />
          </Plot>
        </Cell>
        <Cell />

        <SignalCell $strip>
          {signals.map((s, i) => (
            <React.Fragment key={s}>
              {i === 7 && (
                <Divider>
                  <InsertMark width="6" height="12" aria-hidden="true">
                    <path d="M1 1v10l4-5z" fill="#888" stroke="#111" strokeWidth="1.500" />
                  </InsertMark>
                </Divider>
              )}
              <SignalRow $tall={i > 2} $selected={d.selected === i}>
                <Expander>{(i === 4 || i === 6) && <Plus />}</Expander>
                <Gem />
                <SignalName>{s}</SignalName>
              </SignalRow>
            </React.Fragment>
          ))}
        </SignalCell>
        <SignalCell>
          {d.values.map((v, i) => (
            <React.Fragment key={i}>
              {i === 7 && <Divider $value />}
              <SignalRow $value $tall={i > 2} $selected={d.selected === i}>{v}</SignalRow>
            </React.Fragment>
          ))}
        </SignalCell>
        <Cell $bg="#000">
          <SignalPlot d={d} />
          {d.texts.map(([x, y, t]) => (
            <Mark key={t} style={{ left: pct(x), top: y - 12 }}>{t}</Mark>
          ))}
        </Cell>
        <VBar>
          <ScrollButton $h={22} aria-label="Scroll up"><Triangle dir="up" /></ScrollButton>
          <VThumb />
          <Fill />
          <ScrollButton $h={22} aria-label="Scroll down"><Triangle s={12} /></ScrollButton>
        </VBar>

        <CursorGrid>
          <CursorRow>
            <NowTools />
            <CursorName>Now</CursorName>
          </CursorRow>
          {cursorIds.map((n) => (
            <CursorRow key={n}>
              <LockBox $locked={n !== 54} aria-label={`Lock cursor ${n}`}><Lock open={n === 54} /></LockBox>
              <IconButton aria-label={`Edit cursor ${n}`}><Wrench /></IconButton>
              <IconButton aria-label={`Delete cursor ${n}`}><Minus /></IconButton>
              <CursorName $selected={n === 54}>{`Cursor ${n}`}</CursorName>
            </CursorRow>
          ))}
        </CursorGrid>
        <CursorGrid>
          <CursorValue>{d.now}</CursorValue>
          {d.times.map((t) => (
            <CursorValue key={t} $selected={t === d.times[9]}>{t}</CursorValue>
          ))}
        </CursorGrid>
        <Cell $bg="#000"><CursorPlot d={d} /></Cell>
        <Cell />

        <HBar $inset>
          <ScrollButton aria-label="Scroll names left"><Triangle dir="left" color="#9a9a9a" s={12} /></ScrollButton>
          <Fill />
          <ScrollButton aria-label="Scroll names right"><Triangle dir="right" color="#9a9a9a" s={12} /></ScrollButton>
        </HBar>
        <HBar>
          <ScrollButton aria-label="Scroll values left"><Triangle dir="left" s={12} /></ScrollButton>
          <HThumb $w="28px" />
          <Fill />
          <ScrollButton aria-label="Scroll values right"><Triangle dir="right" s={12} /></ScrollButton>
        </HBar>
        <HBar $bg="#c8c8c8">
          <ScrollButton aria-label="Scroll wave left"><Triangle dir="left" s={12} /></ScrollButton>
          <Fill $n={d.track.pre} />
          <HThumb $flex={d.track.thumb} />
          <Fill $n={d.track.post} />
          <ScrollButton aria-label="Scroll wave right"><Triangle dir="right" s={12} /></ScrollButton>
          <Plot viewBox={`0 0 ${d.width} 28`} preserveAspectRatio="none" pointerEvents="none">
            {d.track.marks.map(([x, w, c]) => (
              <path key={x} d={`M${x + 1} 4V23`} stroke={c} strokeWidth={w} />
            ))}
          </Plot>
        </HBar>
        <Cell />
      </Panes>
      {active ? (
        <BottomEdge />
      ) : (
        <StatusBar>
          <StatusCell>8005597 ps to 59463453 ps</StatusCell>
          <StatusCell>fifo_dout_vld</StatusCell>
          <svg width="26" height="29" stroke="#999" strokeWidth="2" aria-hidden="true">
            <path d="M10 27L24 13M16 27l8-8M21 28l4-4" />
          </svg>
        </StatusBar>
      )}
    </Win>
  );
}

/* ---------- preferences ---------- */

function Preferences() {
  return (
    <Dialog role="dialog" aria-label="Wave Window Preferences">
      <DialogTitle>
        <Icon s={24}>
          <path d="M0 0h24v6H0z" fill="#fff" />
          <path d="M2 1.500h20v3H2z" fill="#1010e0" />
          <path d="M2 24V8h5l5 7 5-7h5v16h-5v-7l-5 6-5-6v7z" fill="#000" stroke="#e8e8e8" />
        </Icon>
        <TitleText>Wave Window Preferences</TitleText>
        <button aria-label="Close preferences">
          <svg width="24" height="16" stroke="#fff" fill="none"><path d="M4 1l15 14M19 1L4 15" strokeWidth="1.500" /></svg>
        </button>
      </DialogTitle>
      <DialogBody>
        <TabRow>
          <Tab>Display</Tab>
          <Tab $active>Grid &amp; Timeline</Tab>
          <TabScroll>
            <TabScrollButton aria-label="Previous tab"><Triangle dir="left" color="#444" s={9} /></TabScrollButton>
            <TabScrollButton aria-label="Next tab"><Triangle dir="right" color="#444" s={9} /></TabScrollButton>
          </TabScroll>
        </TabRow>
        <TabPage>
          <Group $pad="21px 0 12px 15px">
            <Legend $wide $pull={8}>
              <Choice $h={20}><Box type="checkbox" /> Grid Configuration</Choice>
            </Legend>
            <GridForm>
              <Group $dim $pad="10px 0 7px 11px">
                <Legend $pull={3}>Grid Offset</Legend>
                <Field><NumberInput $w={131} disabled defaultValue="0" /> ps</Field>
              </Group>
              <Group $dim $pad="10px 0 7px 12px">
                <Legend $pull={4}>Minimum Grid Spacing</Legend>
                <Field><NumberInput $w={111} disabled defaultValue="40" /> (pixels)</Field>
              </Group>
              <Group $dim $pad="9px 0 8px 11px">
                <Legend $pull={3}>Grid Period</Legend>
                <Choice $h={34} $dim><Box type="checkbox" disabled /> Auto Period</Choice>
                <Field><NumberInput $w={131} disabled defaultValue="1" aria-label="Grid period" /> ps</Field>
              </Group>
              <PushButton $h={33} $placed>Reset to Default</PushButton>
            </GridForm>
          </Group>
          <Group $pad="7px 0 11px 31px">
            <Legend $pull={25}>Timeline Configuration</Legend>
            <Choice $h={33}><Box type="radio" name="timeline" defaultChecked /> Display simulation time in timeline area</Choice>
            <Choice $h={33}><Box type="radio" name="timeline" /> Display grid period count (cycle count)</Choice>
            <UnitRow>
              Time units
              <UnitWrap>
                <UnitSelect defaultValue="ms">
                  {["fs", "ps", "ns", "us", "ms", "sec"].map((u) => <option key={u}>{u}</option>)}
                </UnitSelect>
                <UnitArrow><Triangle s={18} /></UnitArrow>
              </UnitWrap>
            </UnitRow>
            <Choice $h={42}><Box type="checkbox" /> Use commas in time values</Choice>
            <Choice $h={42}><Box type="checkbox" /> Show frequency in cursor delta</Choice>
          </Group>
          <Group $pad="3px 0 3px 31px">
            <Legend $pull={25}>Cursor Control</Legend>
            <Choice $h={42}>
              <Box type="checkbox" defaultChecked /> Left Mouse click in wave area moves the closest cursor to the mouse location
            </Choice>
          </Group>
        </TabPage>
        <Footer>
          <PushButton $focus>OK</PushButton>
          <PushButton>Cancel</PushButton>
          <PushButton>Apply</PushButton>
        </Footer>
      </DialogBody>
    </Dialog>
  );
}

const Wallpaper = () => (
  <Layer viewBox="0 0 2229 1231" preserveAspectRatio="none">
    <defs>
      <linearGradient id="top" x1="0" y1="0" x2="1" y2="0">
        <stop offset="0" stopColor="#4e6f96" />
        <stop offset="1" stopColor="#48688c" />
      </linearGradient>
    </defs>
    <path d="M0 0h2229v1231H0z" fill="url(#top)" />
    <path d="M0 119H1490L2229 112V1231H0z" fill="#5c6f8d" />
    <path d="M0 306Q30 304 60 300H2180V262L2229 258V1231H0z" fill="#656a82" />
    <path d="M0 388H40V420H0z" fill="#7d7480" />
    <path d="M0 426Q40 410 60 380H2190Q2210 405 2229 410V1231H0z" fill="#3a6797" />
    <path d="M0 630Q20 640 60 650H2190L2229 634V1231H0z" fill="#2e5a88" />
    <path d="M0 850H2190L2229 800V1231H0z" fill="#28507f" />
    <path d="M0 1110L60 1190H2190V1130L2229 1110V1231H0z" fill="#1f4273" />
    <path d="M40 1195H2190L2229 1231H92z" fill="#1a3661" />
    <path d="M36 1195H156L130 1231H92z" fill="#244a7a" />
  </Layer>
);

const Annotations = () => (
  <Layer viewBox="0 0 2229 1231" preserveAspectRatio="none" fill="none" stroke="#ee1c25">
    <path d="M553 862H1045V941H553zM1120 834H1144V889H1120zM1611 845H2109V905H1611z" strokeWidth="2" />
    <path d="M1058 922L1098 876M1157 853L1536 515M1737 516L1963 823" strokeWidth="6" strokeLinecap="round" />
    <g fill="#ee1c25" stroke="none">
      <path d="M1109 862L1086 875L1095 880L1106 889z" />
      <path d="M1548 502L1524 511L1532 519L1538 526z" />
      <path d="M1971 835L1949 822L1959 819L1966 811z" />
    </g>
  </Layer>
);

export default function App() {
  return (
    <Desktop>
      <Global />
      <Wallpaper />
      <WaveWindow d={second} col={3} />
      <WaveWindow d={first} col={2} />
      <Preferences />
      <Annotations />
      <Watermark>CSDN @FPGA初学者nan</Watermark>
    </Desktop>
  );
}
